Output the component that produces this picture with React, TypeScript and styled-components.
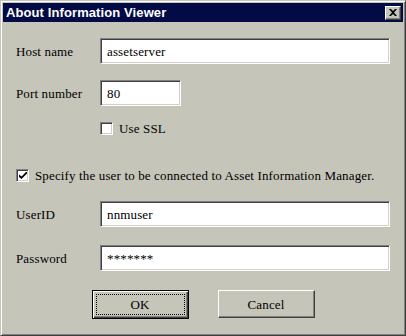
import React from "react";
import styled, { createGlobalStyle } from "styled-components";

const Global = createGlobalStyle`
  html, body { margin: 0; padding: 0; background: #c6c5ba; }
  * { box-sizing: border-box; }
`;

const FACE = "#c6c5ba";
const SERIF = `"Liberation Serif", "Times New Roman", serif`;

const Window = styled.div`
  width: 406px;
  height: 336px;
  display: flex;
  flex-direction: column;
  background: ${FACE};
  border: 1px solid;
  border-color: ${FACE} #404040 #404040 ${FACE};
  box-shadow: inset 1px 1px #ffffff, inset -1px -1px #808080;
  padding: 2px;
`;

const TitleBar = styled.div`
  height: 19px;
  flex: none;
  display: flex;
  align-items: center;
  justify-content: space-between;
  background: #020b45;
  padding: 0 2px 0 3px;
`;

const TitleText = styled.span`
  font-family: "Liberation Sans", Arial, sans-serif;
  font-weight: bold;
  font-size: 13px;
  color: #ffffff;
  line-height: 19px;
  letter-spacing: 0.1px;
`;

const CloseButton = styled.div`
  width: 16px;
  height: 14px;
  background: ${FACE};
  border: 1px solid;
  border-color: #ffffff #404040 #404040 #ffffff;
  box-shadow: inset -1px -1px #808080;
  display: flex;
  align-items: center;
  justify-content: center;
`;

const Body = styled.div`
  flex: 1;
  display: flex;
  flex-direction: column;
  padding: 0 0 0 13px;
  font-family: ${SERIF};
  font-size: 13px;
  line-height: 13px;
  letter-spacing: 0.14px;
  color: #000000;
`;

const Row = styled.div<{ $top: number }>`
  display: flex;
  align-items: center;
  margin-top: ${(p) => p.$top}px;
`;

const Label = styled.span`
  width: 84px;
  flex: none;
  font-family: ${SERIF};
  font-size: 13px;
`;

const Field = styled.div<{ $w: number; $h?: number }>`
  width: ${(p) => p.$w}px;
  height: ${(p) => p.$h ?? 26}px;
  background: #ffffff;
  border: 1px solid;
  border-color: #808080 #ffffff #ffffff #808080;
  box-shadow: inset 1px 1px #404040, inset -1px -1px #d4d0c8;
  padding: 0 0 0 6px;
  display: flex;
  align-items: center;
  font-family: ${SERIF};
  font-size: 13px;
  white-space: nowrap;
`;

const Check = styled.div`
  width: 13px;
  height: 13px;
  flex: none;
  background: #ffffff;
  border: 1px solid;
  border-color: #808080 #ffffff #ffffff #808080;
  box-shadow: inset 1px 1px #404040, inset -1px -1px #d4d0c8;
  display: flex;
  align-items: center;
  justify-content: center;
`;

const CheckLabel = styled.span`
  margin-left: 6px;
  font-family: ${SERIF};
  font-size: 13px;
  white-space: nowrap;
`;

const Indent = styled.div`
  width: 84px;
  flex: none;
`;

const Buttons = styled.div`
  display: flex;
  justify-content: center;
  gap: 29px;
  margin-top: 19px;
  padding-right: 13px;
`;

const Button = styled.div<{ $default?: boolean }>`
  width: 97px;
  height: ${(p) => (p.$default ? 29 : 28)}px;
  background: ${FACE};
  border: 1px solid;
  border-color: ${(p) =>
    p.$default ? "#000000" : "#ffffff #404040 #404040 #ffffff"};
  box-shadow: ${(p) =>
    p.$default
      ? "inset 1px 1px #ffffff, inset -1px -1px #404040, inset -2px -2px #808080"
      : "inset -1px -1px #808080"};
  display: flex;
  align-items: center;
  justify-content: center;
  padding: ${(p) => (p.$default ? "3px" : "0")};
  font-family: ${SERIF};
  font-size: 13px;
`;

const Focus = styled.div`
  width: 100%;
  height: 100%;
  border: 1px dotted #000000;
  display: flex;
  align-items: center;
  justify-content: center;
`;

export default function App() {
  return (
    <>
      <Global />
      <Window>
        <TitleBar>
          <TitleText>About Information Viewer</TitleText>
          <CloseButton>
            <svg width="8" height="7" viewBox="0 0 8 7">
              <path d="M0 0h2l2 2 2-2h2L5 3.5 8 7H6L4 5 2 7H0l3-3.5z" fill="#000" />
            </svg>
          </CloseButton>
        </TitleBar>
        <Body>
          <Row $top={16}>
            <Label>Host name</Label>
            <Field $w={290}>assetserver</Field>
          </Row>
          <Row $top={16}>
            <Label>Port number</Label>
            <Field $w={81}>80</Field>
          </Row>
          <Row $top={16}>
            <Indent />
            <Check />
            <CheckLabel>Use SSL</CheckLabel>
          </Row>
          <Row $top={34}>
            <Check>
              <svg width="8" height="7" viewBox="0 0 8 7">
                <path d="M0 2.5v2.5l2.5 2 5.5-5.5V-1L2.5 4.5z" fill="#000" />
              </svg>
            </Check>
            <CheckLabel>
              Specify the user to be connected to Asset Information Manager.
            </CheckLabel>
          </Row>
          <Row $top={19}>
            <Label>UserID</Label>
            <Field $w={290}>nnmuser</Field>
          </Row>
          <Row $top={18}>
            <Label>Password</Label>
            <Field $w={290}>*******</Field>
          </Row>
          <Buttons>
            <Button $default>
              <Focus>OK</Focus>
            </Button>
            <Button>Cancel</Button>
          </Buttons>
        </Body>
      </Window>
    </>
  );
}
